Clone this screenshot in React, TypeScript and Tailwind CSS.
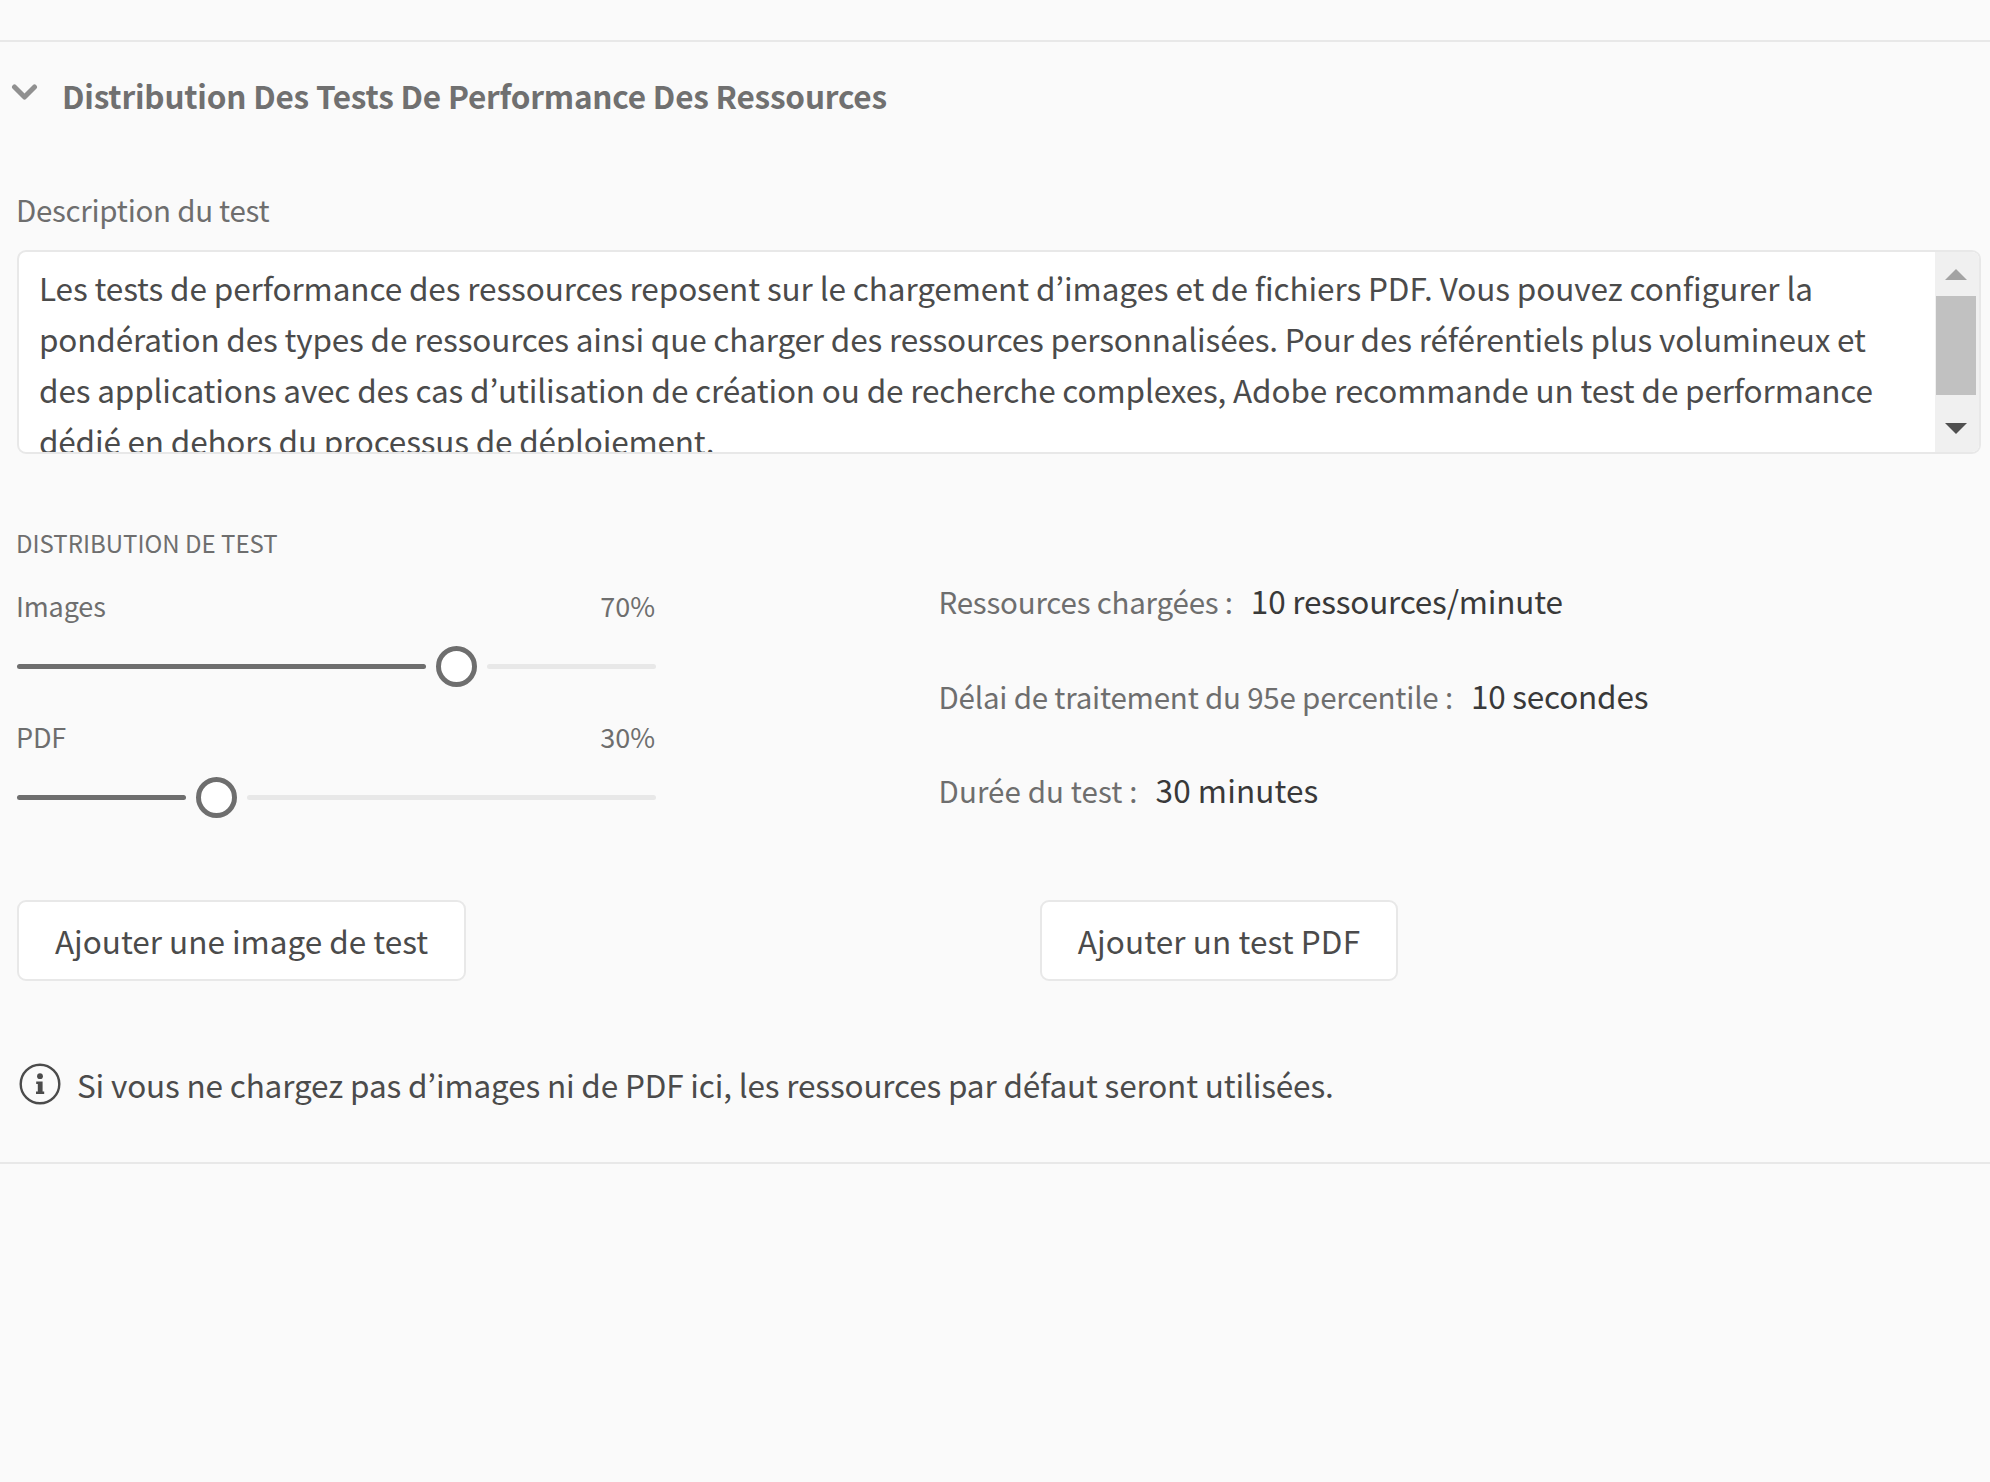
type SliderProps = { label: string; value: number };

function Slider({ label, value }: SliderProps) {
  return (
    <div>
      <div className="flex h-9 items-center justify-between text-[27px] leading-9 text-[#6e6e6e]">
        <span className="-ml-px tracking-[-0.15px]">{label}</span>
        <span className="mr-px">{value}%</span>
      </div>
      <div className="mt-[22px] flex h-[41px] items-center gap-[10px]">
        <div
          className="h-[5px] rounded-full bg-[#6e6e6e]"
          style={{ width: `calc((100% - 39px) * ${value / 100} - 11.5px)` }}
        />
        <div className="size-[41px] shrink-0 rounded-full border-[5px] border-[#6e6e6e] bg-white" />
        <div className="h-[5px] flex-1 rounded-full bg-[#e8e8e8]" />
      </div>
    </div>
  );
}

type StatProps = { label: string; value: string; spacing?: string };

function Stat({ label, value, spacing = "tracking-[-0.2px]" }: StatProps) {
  return (
    <div className={`flex h-10 items-baseline gap-[18px] whitespace-nowrap leading-10 ${spacing}`}>
      <span className="text-[29.5px] text-[#6e6e6e]">{label}</span>
      <span className="text-[31.5px] text-[#393939]">{value}</span>
    </div>
  );
}

export default function App() {
  return (
    <div className="h-[1482px] w-[1990px] overflow-hidden bg-[#fafafa] pt-10 font-['Noto_Sans_CJK_KR','Noto_Sans',sans-serif] text-[#4b4b4b]">
      <section className="h-[1124px] border-y-2 border-[#e8e8e8] pr-[9px] pl-[17px]">
        <header className="flex pt-[33px]">
          <svg className="-ml-[6px] mt-[7px] h-5 w-7" viewBox="0 0 28 20" fill="none" stroke="#909090" strokeWidth="5" strokeLinecap="round" strokeLinejoin="round">
            <path d="M3.5 5 13.5 15 23.5 5" />
          </svg>
          <h2 className="ml-[23px] text-[31.5px] leading-10 font-bold tracking-[-0.2px] whitespace-nowrap text-[#707070]">
            Distribution Des Tests De Performance Des Ressources
          </h2>
        </header>

        <p className="mt-[74px] -ml-[1px] text-[29.5px] leading-10 tracking-[-0.28px] text-[#6e6e6e]">Description du test</p>

        <div className="mt-[21px] flex h-[204px] overflow-hidden rounded-[9px] border-2 border-[#e8e8e8] bg-white">
          <div className="flex-1 overflow-hidden pt-[10px] pl-[20px] text-[31.5px] leading-[51px] whitespace-nowrap">
            <p className="tracking-[-0.105px]">
              Les tests de performance des ressources reposent sur le chargement d’images et de fichiers PDF. Vous pouvez configurer la
            </p>
            <p className="tracking-[-0.165px]">
              pondération des types de ressources ainsi que charger des ressources personnalisées. Pour des référentiels plus volumineux et
            </p>
            <p className="tracking-[-0.145px]">
              des applications avec des cas d’utilisation de création ou de recherche complexes, Adobe recommande un test de performance
            </p>
            <p className="tracking-[-0.18px]">dédié en dehors du processus de déploiement.</p>
          </div>
          <div className="flex w-[44px] flex-col items-center bg-[#f0f0f0] pt-[17px] pr-[2px]">
            <svg className="h-[11px] w-[22px]" viewBox="0 0 22 11" fill="#a3a3a3">
              <path d="M0 11 11 0 22 11Z" />
            </svg>
            <div className="mt-[16px] h-[99px] w-10 bg-[#c1c1c1]" />
            <svg className="mt-[28px] h-[11px] w-[22px]" viewBox="0 0 22 11" fill="#505050">
              <path d="M0 0H22L11 11Z" />
            </svg>
          </div>
        </div>

        <h3 className="mt-[74px] -ml-[1px] text-2xl leading-[30px] tracking-normal text-[#6e6e6e]">DISTRIBUTION DE TEST</h3>

        <div className="flex">
          <div className="flex w-[639px] flex-col gap-[32px] pt-[30px]">
            <Slider label="Images" value={70} />
            <Slider label="PDF" value={30} />
          </div>
          <div className="ml-[282.5px] flex flex-col gap-[54.5px] pt-[22px]">
            <Stat label="Ressources chargées :" value="10 ressources/minute" />
            <Stat label="Délai de traitement du 95e percentile :" value="10 secondes" />
            <Stat label="Durée du test :" value="30 minutes" spacing="tracking-[0.1px]" />
          </div>
        </div>

        <div className="mt-[82px] flex gap-[574px] text-[31.5px] whitespace-nowrap">
          <button className="h-[81px] w-[449px] rounded-[9px] border-2 border-[#e8e8e8] bg-white">Ajouter une image de test</button>
          <button className="h-[81px] w-[358px] rounded-[9px] border-2 border-[#e8e8e8] bg-white tracking-[0.1px]">Ajouter un test PDF</button>
        </div>

        <div className="mt-[83px] flex items-start">
          <svg className="ml-[2px] -mt-px size-[42px]" viewBox="0 0 42 42" fill="none">
            <circle cx="21" cy="21" r="19.3" stroke="#4b4b4b" strokeWidth="2.4" />
            <circle cx="21" cy="13.2" r="2.9" fill="#4b4b4b" />
            <path d="M17.2 18.4H23.6V28.4H25.2V31H17V28.4H18.8V21H17.2Z" fill="#4b4b4b" />
          </svg>
          <p className="ml-[16px] text-[31.5px] leading-10 tracking-[-0.16px] whitespace-nowrap">
            Si vous ne chargez pas d’images ni de PDF ici, les ressources par défaut seront utilisées.
          </p>
        </div>
      </section>
    </div>
  );
}
